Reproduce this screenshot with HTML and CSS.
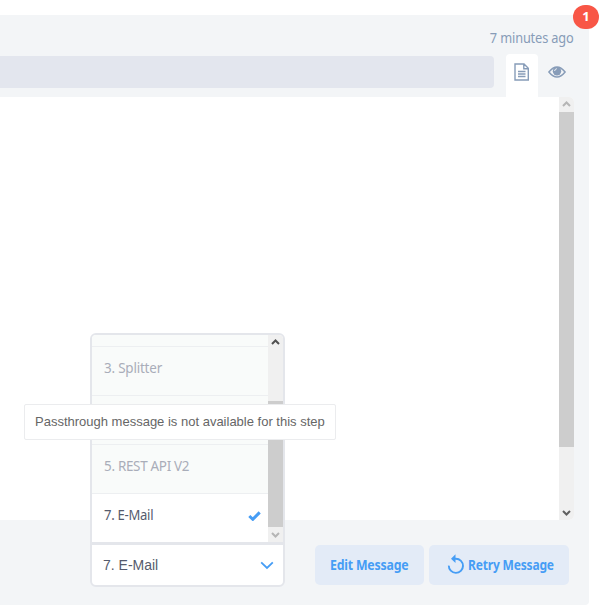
FILE: index.html
```html
<!DOCTYPE html>
<html lang="en">
<head>
<meta charset="utf-8">
<title>Message</title>
<link rel="stylesheet" href="styles.css">
</head>
<body>
<main class="panel">
  <span class="badge">1</span>
  <div class="time"><span class="time-text">7 minutes ago</span></div>
  <div class="toolbar">
    <div class="bar"></div>
    <div class="tab tab-active">
      <svg width="16" height="18" viewBox="0 0 16 18" fill="none" stroke="#879cb8" stroke-width="1.4"><path d="M1 1h9l4.3 4.3V17H1zM9.8 1v4.7h4.5M4 8.5h7.5M4 11h7.5M4 13.5h7.5"/></svg>
    </div>
    <div class="tab">
      <svg width="18" height="12" viewBox="0 0 18 12"><path d="M.9 6Q9-4 17.1 6Q9 16 .9 6Z" fill="none" stroke="#879cb8" stroke-width="1.5"/><circle cx="9" cy="5.2" r="4.2" fill="#879cb8"/><path d="M6.6 5Q6.8 3 8.8 2.7" fill="none" stroke="#f3f5f7" stroke-width="1"/></svg>
    </div>
  </div>
  <div class="content">
    <div class="scroll">
      <svg width="15" height="15" viewBox="0 0 15 15"><path d="M4 9l3.5-3.5L11 9" fill="none" stroke="#b5b5b5" stroke-width="2"/></svg>
      <div class="thumb"></div>
      <svg width="15" height="15" viewBox="0 0 15 15"><path d="M4 6l3.5 3.5L11 6" fill="none" stroke="#606060" stroke-width="2"/></svg>
    </div>
  </div>
  <footer class="footer">
    <div class="select">
      <span class="select-text">7. E-Mail</span>
      <svg width="14" height="9" viewBox="0 0 14 9"><path d="M1.2 1.3L7 7l5.8-5.7" fill="none" stroke="#469df5" stroke-width="1.8"/></svg>
      <div class="menu">
        <div class="items">
          <div class="item item-cut"></div>
          <div class="item"><span class="label label-splitter">3. Splitter</span></div>
          <div class="item"></div>
          <div class="item"><span class="label">5. REST API V2</span></div>
          <div class="item item-on"><span class="label label-mail">7. E-Mail</span>
            <svg width="13" height="10" viewBox="0 0 13 10"><path d="M1.3 5l3.5 3.3L11.7 1.4" fill="none" stroke="#469df5" stroke-width="3"/></svg>
          </div>
        </div>
        <div class="scroll menu-scroll">
          <svg width="15" height="15" viewBox="0 0 15 15"><path d="M4 9l3.5-3.5L11 9" fill="none" stroke="#505050" stroke-width="2"/></svg>
          <div class="menu-thumb"></div>
          <svg width="15" height="15" viewBox="0 0 15 15"><path d="M4 6l3.5 3.5L11 6" fill="none" stroke="#b5b5b5" stroke-width="2"/></svg>
        </div>
      </div>
    </div>
    <div class="button edit"><span class="caption">Edit Message</span></div>
    <div class="button retry">
      <svg width="18" height="20" viewBox="0 0 18 20"><path d="M1.8 11.6A7.1 7.1 0 1 0 8.9 4.7H6.5" fill="none" stroke="#469df5" stroke-width="1.9"/><path d="M8.5.3v8.8L4 4.7z" fill="#469df5"/></svg>
      <span class="caption caption-retry">Retry Message</span>
    </div>
  </footer>
  <div class="tooltip"><span>Passthrough message is not available for this step</span></div>
</main>
</body>
</html>
```
FILE: styles.css
```css
* { box-sizing: border-box; }
body {
  margin: 0;
  padding-top: 15px;
  height: 612px;
  overflow: hidden;
  background: #fff;
  font: 14px/20px "Noto Sans", sans-serif;
}
svg { display: block; flex: none; }
span { white-space: nowrap; }
.panel {
  position: relative;
  width: 589px;
  height: 590px;
  background: #f3f5f7;
  border-radius: 0 0 4px 0;
}
.badge {
  position: absolute;
  top: -10px;
  left: 573px;
  width: 26px;
  height: 24px;
  border-radius: 12px;
  background: #f85646;
  color: #fff;
  font: bold 13px/23px "Open Sans", sans-serif;
  text-align: center;
}
.time {
  height: 39px;
  padding: 13px 15px 0 0;
  display: flex;
  justify-content: flex-end;
  color: #879cb8;
}
.time-text { font-size: 13.5px; letter-spacing: -0.15px; transform: scaleX(0.945); transform-origin: right; }
.toolbar { display: flex; height: 43px; }
.bar {
  width: 494px;
  height: 32px;
  margin: 2px 12px 0 0;
  border-radius: 0 4px 4px 0;
  background: #e3e6ee;
}
.tab {
  width: 32px;
  height: 43px;
  padding: 12px 0 0 10px;
}
.tab-active {
  padding: 9px 0 0 8px;
  background: #fff;
  border-radius: 4px 4px 0 0;
}
.content {
  width: 574px;
  height: 423px;
  display: flex;
  justify-content: flex-end;
  background: #fff;
  border-radius: 0 5px 5px 0;
}
.scroll {
  width: 15px;
  display: flex;
  flex-direction: column;
  justify-content: space-between;
  background: #f0f0f0;
  border-radius: 0 5px 5px 0;
}
.thumb { height: 335px; margin-bottom: auto; background: #cdcdcd; }
.footer {
  display: flex;
  align-items: flex-start;
  padding: 23px 0 0 90px;
}
.select {
  position: relative;
  width: 195px;
  height: 44px;
  margin-right: 30px;
  padding: 0 9px 0 11px;
  border: 2px solid #e4e6eb;
  border-radius: 0 0 6px 6px;
  background: #fff;
  display: flex;
  align-items: center;
  justify-content: space-between;
  color: #555b6d;
}
.select-text { font: 14px/20px "Liberation Sans", sans-serif; }
.menu {
  position: absolute;
  left: -2px;
  bottom: 40px;
  width: 195px;
  height: 212px;
  display: flex;
  overflow: hidden;
  border: 2px solid #e4e6eb;
  border-bottom-width: 3px;
  border-radius: 6px 6px 0 0;
}
.items { width: 176px; background: #f9fbfa; }
.item {
  height: 49px;
  padding: 0 7px 6px 12px;
  border-bottom: 1px solid #edeff1;
  display: flex;
  align-items: center;
  justify-content: space-between;
  color: #a9adb9;
}
.item-cut { height: 12px; padding: 0; }
.item-on { height: 48px; padding-bottom: 4px; border: 0; background: #fff; color: #555b6d; }
.menu-scroll { border-radius: 0; }
.menu-thumb { height: 126px; margin-top: auto; background: #cdcdcd; }
.label { font-size: 13.5px; letter-spacing: -0.3px; transform: scaleX(0.995); transform-origin: left; }
.label-splitter { letter-spacing: -0.2px; }
.label-mail { transform: translateY(-1px) scaleX(0.97); }
.button {
  height: 40px;
  margin-top: 2px;
  display: flex;
  align-items: center;
  border-radius: 5px;
  background: #e3ebf7;
  color: #469df5;
  font-weight: 700;
}
.edit { width: 109px; margin-right: 5px; padding-left: 15px; }
.retry { width: 140px; padding: 0 0 2px 18px; gap: 3px; }
.caption { font-size: 13.5px; letter-spacing: -0.2px; transform: scaleX(0.91); transform-origin: left; }
.caption-retry { transform: translateY(1px) scaleX(0.89); }
.tooltip {
  position: absolute;
  left: 24px;
  top: 389px;
  width: 312px;
  height: 36px;
  padding: 7px 0 0 10px;
  border: 1px solid #ebecee;
  border-radius: 2px;
  background: #fff;
  color: #666;
  font: 13px/20px "Liberation Sans", sans-serif;
}
```
